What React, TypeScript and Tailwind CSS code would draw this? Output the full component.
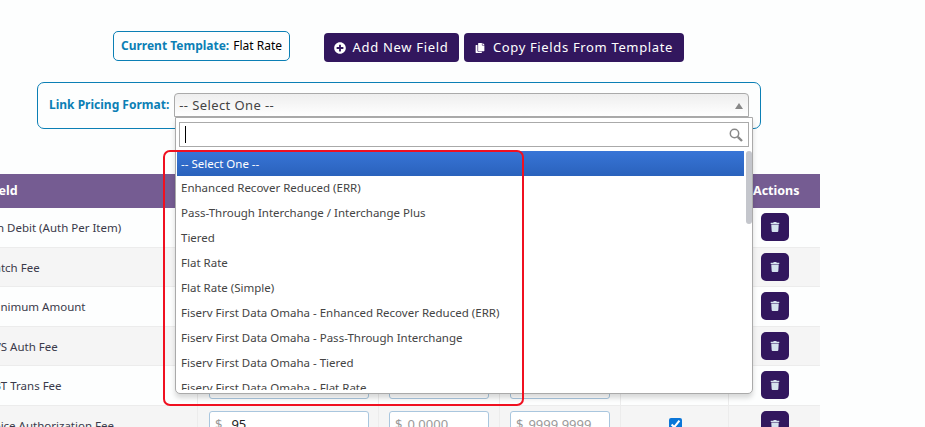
import { FaCopy, FaPlusCircle, FaTrash } from 'react-icons/fa'

const OPTIONS = [
  'Enhanced Recover Reduced (ERR)',
  'Pass-Through Interchange / Interchange Plus',
  'Tiered',
  'Flat Rate',
  'Flat Rate (Simple)',
  'Fiserv First Data Omaha - Enhanced Recover Reduced (ERR)',
  'Fiserv First Data Omaha - Pass-Through Interchange',
  'Fiserv First Data Omaha - Tiered',
  'Fiserv First Data Omaha - Flat Rate',
]

const ROWS = [
  { label: 'Pin Debit (Auth Per Item)' },
  { label: 'Batch Fee' },
  { label: 'Minimum Amount' },
  { label: 'AVS Auth Fee' },
  { label: 'EBT Trans Fee' },
  { label: 'Voice Authorization Fee', value: '95', checked: true },
]

function MoneyInput({ width, value, placeholder }: { width: string; value?: string; placeholder: string }) {
  return (
    <div className={`${width} flex h-[28px] shrink-0 items-center rounded-[3px] border border-[#a9c6de] bg-white pl-[5px] text-[13px] ${value ? 'gap-[9px]' : 'gap-[5px]'}`}>
      <span className="text-[#9a9a9a]">$</span>
      <span className={value ? 'text-[#222]' : 'text-[#9a9a9a]'}>{value ?? placeholder}</span>
    </div>
  )
}

function TableRow({ row, index }: { row: (typeof ROWS)[number]; index: number }) {
  return (
    <div className={`flex h-[39.5px] border-b border-[#ececec] ${index % 2 === 1 ? 'bg-[#f5f5f5]' : 'bg-[#fdfefe]'}`}>
      <div className="flex w-[212px] shrink-0 items-center border-r border-[#ececec] pl-[1px] pt-[1px] text-[11.5px] text-[#3a3a4a]">
        <span className="whitespace-nowrap">{row.label}</span>
      </div>
      <div className="flex w-[181px] shrink-0 items-center border-r border-[#ececec] pl-[11px]">
        <MoneyInput width="w-[160px]" value={row.value} placeholder="0.0000" />
      </div>
      <div className="flex w-[121px] shrink-0 items-center border-r border-[#ececec] pl-[10px]">
        <MoneyInput width="w-[100px]" placeholder="0.0000" />
      </div>
      <div className="flex w-[121px] shrink-0 items-center border-r border-[#ececec] pl-[10px]">
        <MoneyInput width="w-[100px]" placeholder="9999.9999" />
      </div>
      <div className="flex w-[108px] shrink-0 items-center justify-center border-r border-[#ececec] pl-[2px]">
        {row.checked && (
          <input type="checkbox" defaultChecked className="h-[13px] w-[13px] accent-[#0b76d8]" />
        )}
      </div>
      <div className="flex w-[91px] shrink-0 items-center pl-[32px]">
        <button className="flex h-[28px] w-[28px] items-center justify-center rounded-[5px] bg-[#32175e] text-[#d5e2ee]">
          <FaTrash className="h-[10px] w-[10px]" />
        </button>
      </div>
    </div>
  )
}

export default function App() {
  return (
    <div className="relative h-[427px] w-[925px] overflow-hidden bg-[#fdfefe] font-['Noto_Sans','DejaVu_Sans',sans-serif]">
      {/* Template + actions */}
      <div className="flex items-start pl-[113px] pt-[31px]">
        <div className="flex h-[30px] w-[177px] items-center justify-center gap-[4px] rounded-[5px] border border-[#0b7fb5] text-[12px]">
          <span className="font-bold text-[#0b7fb5]">Current Template:</span>
          <span className="text-black">Flat Rate</span>
        </div>
        <div className="ml-[34px] mt-[2px] flex gap-[5px]">
          <button className="flex h-[29px] w-[135px] items-center justify-center gap-[6px] rounded-[4px] bg-[#32175e] text-[13px] tracking-[0.7px] text-white">
            <FaPlusCircle className="h-[12px] w-[12px]" />
            Add New Field
          </button>
          <button className="flex h-[29px] w-[220px] items-center justify-center gap-[8px] rounded-[4px] bg-[#32175e] text-[13px] tracking-[0.65px] text-white">
            <FaCopy className="h-[10px] w-[10px]" />
            Copy Fields From Template
          </button>
        </div>
      </div>

      {/* Link pricing format */}
      <div className="ml-[37px] mt-[20px] flex h-[47px] w-[724px] rounded-[7px] border border-[#0b7fb5] bg-[#fdfefe] pl-[11px] pr-[11px] pt-[10px]">
        <span className="mr-[5px] text-[12px] font-bold leading-[24px] text-[#0b7fb5]">Link Pricing Format:</span>
        <div className="flex h-[24px] flex-1 items-center justify-between rounded-t-[4px] border border-[#aaa] bg-gradient-to-b from-[#eeeeee] to-white pl-[4px] pr-[4px] pt-[1px] text-[13px] tracking-[0.4px] text-[#444]">
          -- Select One --
          <span className="mr-[1px] h-0 w-0 border-x-[4px] border-b-[6px] border-x-transparent border-b-[#888]" />
        </div>
      </div>

      {/* Fees table */}
      <div className="ml-[-14px] mt-[45px] w-[834px]">
        <div className="flex h-[34px] items-center bg-[#755c92] pt-[1px] text-[12.5px] font-bold text-white">
          <span className="w-[767px] pl-[2px]">Field</span>
          <span>Actions</span>
        </div>
        {ROWS.map((row, i) => (
          <TableRow key={row.label} row={row} index={i} />
        ))}
      </div>

      {/* Open select dropdown */}
      <div className="absolute left-[175px] top-[117px] h-[277px] w-[578px] overflow-hidden rounded-b-[5px] border border-[#aaa] bg-white shadow-[0_4px_5px_rgba(0,0,0,0.15)]">
        <div className="mx-[3px] mt-[4px] flex h-[25px] w-[570px] items-center justify-between border border-[#aaa] pl-[5px] pr-[5px]">
          <span className="h-[17px] w-px bg-black" />
          <svg viewBox="0 0 14 14" className="h-[14px] w-[14px]" fill="none" stroke="#888">
            <circle cx="5.5" cy="5.5" r="4.2" strokeWidth="1.5" />
            <line x1="8.8" y1="8.8" x2="13" y2="13" strokeWidth="2.4" />
          </svg>
        </div>
        <ul className="ml-[1px] mt-[4px] h-[239px] w-[567px] overflow-hidden text-[11.5px] text-[#444]">
          <li className="flex h-[25px] items-center bg-gradient-to-b from-[#3875d7] to-[#2a62bc] px-[4px] text-white">
            -- Select One --
          </li>
          {OPTIONS.map((option) => (
            <li key={option} className="flex h-[25px] items-center px-[4px] pb-[1px]">
              {option}
            </li>
          ))}
        </ul>
        <div className="absolute right-0 top-[33px] h-[73px] w-[6px] rounded-[3px] bg-[#c4c6cc]" />
      </div>

      {/* Red annotation */}
      <div className="absolute left-[163px] top-[150px] h-[256px] w-[361px] rounded-[7px] border-2 border-[#f01020]" />
    </div>
  )
}
